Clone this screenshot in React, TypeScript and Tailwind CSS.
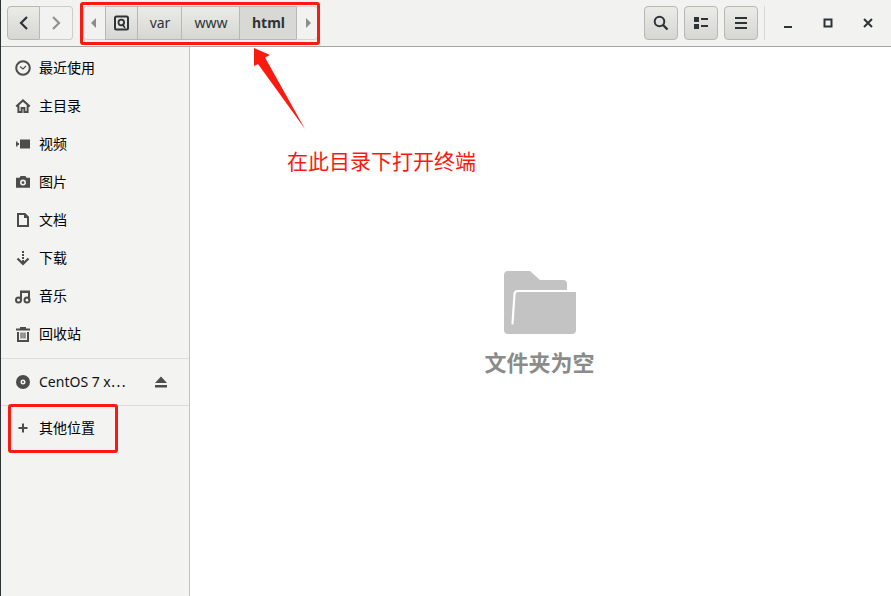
const FONT = "font-['Noto_Sans','Noto_Sans_CJK_SC',sans-serif]";

const btn = "flex h-[34px] items-center justify-center border border-[#b8b8b2] bg-gradient-to-b from-[#ebebe8] to-[#d6d6d2]";

function Glyph({ children, size = 16 }: { children: React.ReactNode; size?: number }) {
  return (
    <svg width={size} height={size} viewBox="0 0 16 16" fill="#4c4c4c" className="shrink-0">
      {children}
    </svg>
  );
}

const sidebarItems: { label: string; icon: React.ReactNode }[] = [
  {
    label: "最近使用",
    icon: (
      <Glyph>
        <circle cx="8" cy="8" r="6.800" fill="none" stroke="#4c4c4c" strokeWidth="2" />
        <path d="M5 6.500 8 9l3-3" fill="none" stroke="#4c4c4c" strokeWidth="1.100" />
      </Glyph>
    ),
  },
  {
    label: "主目录",
    icon: (
      <Glyph>
        <path
          d="M1.200 8.600 8 2.400l6.800 6.200M3.400 7.500V14H6.600V10H9.400V14H12.600V7.500"
          fill="none"
          stroke="#4c4c4c"
          strokeWidth="2"
        />
      </Glyph>
    ),
  },
  {
    label: "视频",
    icon: (
      <Glyph>
        <path d="M1 5.500h1.500v1.500H4v2H2.500v1.500H1zM5 3.500h10v9H5z" />
      </Glyph>
    ),
  },
  {
    label: "图片",
    icon: (
      <Glyph>
        <path
          fillRule="evenodd"
          d="M5.500 2h5l1 1.800H15v10H1v-10h3.500zM8 5.600a3 3 0 1 0 0 6 3 3 0 0 0 0-6zM8 7.200a1.400 1.400 0 1 1 0 2.800 1.400 1.400 0 0 1 0-2.800z"
        />
      </Glyph>
    ),
  },
  {
    label: "文档",
    icon: (
      <Glyph>
        <path d="M3 2h6.500L13 5.500V14H3z" fill="none" stroke="#4c4c4c" strokeWidth="2" />
        <path d="M9 1h1l4 4v1H9z" />
      </Glyph>
    ),
  },
  {
    label: "下载",
    icon: (
      <Glyph>
        <path d="M7 1h2v2H7zM7 4h2v2H7zM7 7h2v2H7z" />
        <path d="M2.500 8.500 8 14l5.500-5.500" fill="none" stroke="#4c4c4c" strokeWidth="2.200" />
        <path d="M7 10h2v3H7z" />
      </Glyph>
    ),
  },
  {
    label: "音乐",
    icon: (
      <Glyph>
        <circle cx="3.500" cy="12" r="2.500" fill="none" stroke="#4c4c4c" strokeWidth="2" />
        <circle cx="12" cy="12" r="2.500" fill="none" stroke="#4c4c4c" strokeWidth="2" />
        <path d="M5 12V2.500h10V12h-2V5H7v7z" />
      </Glyph>
    ),
  },
  {
    label: "回收站",
    icon: (
      <Glyph>
        <path d="M5 1h6v1.500h4V4.500H1V2.500h4z" />
        <path d="M3 6v9h10V6" fill="none" stroke="#4c4c4c" strokeWidth="2" />
        <path d="M5.500 6.500h1.100v6H5.500zM7.450 6.500h1.100v6h-1.100zM9.400 6.500h1.100v6H9.400z" />
      </Glyph>
    ),
  },
];

function SidebarRow({ icon, children }: { icon: React.ReactNode; children: React.ReactNode }) {
  return (
    <div className="flex h-[38px] items-center gap-2 pl-[14px] text-sm text-black">
      {icon}
      <span>{children}</span>
    </div>
  );
}

export default function App() {
  return (
    <div className={`${FONT} relative flex h-[596px] w-[891px] flex-col overflow-hidden border-l border-[#2e3436] bg-white`}>
      {/* header bar */}
      <header className="flex h-[47px] shrink-0 items-center border-b border-[#a8a8a2] bg-[#f2f2f0] pl-[6px]">
        <div className="flex">
          <div className={`${btn} w-[33px] rounded-l-[4px]`}>
            <svg width="16" height="16" viewBox="0 0 16 16" fill="none" stroke="#2e3436" strokeWidth="2.200">
              <path d="M11 2 5 8l6 6" />
            </svg>
          </div>
          <div className="flex h-[34px] w-[33px] items-center justify-center rounded-r-[4px] border border-l-0 border-[#cdcdc8] bg-[#f2f2f0]">
            <svg width="16" height="16" viewBox="0 0 16 16" fill="none" stroke="#92928f" strokeWidth="2.200">
              <path d="m5 2 6 6-6 6" />
            </svg>
          </div>
        </div>

        {/* path bar */}
        <div className="ml-[10px] flex text-sm text-[#2e3436]">
          <div className="flex h-[34px] w-[22px] items-center justify-center rounded-l-[4px] border border-r-0 border-[#d4d4d0] bg-[#f2f2f0] pr-[2px]">
            <svg width="8" height="10" viewBox="0 0 8 10" fill="#8c8c88"><path d="M6 0v10L1 5z" /></svg>
          </div>
          <div className={`${btn} w-[33px]`}>
            <svg width="15" height="16" viewBox="0 0 15 16">
              <rect x="1" y="1.500" width="13" height="13" rx="1.500" fill="#e4e4e0" stroke="#2e3436" strokeWidth="2" />
              <circle cx="7.300" cy="7.500" r="2.800" fill="none" stroke="#2e3436" strokeWidth="1.800" />
              <path d="m8 9 3 3.800" stroke="#2e3436" strokeWidth="1.800" />
            </svg>
          </div>
          <div className={`${btn} w-[44px] border-l-0 pl-px`}>var</div>
          <div className={`${btn} w-[58px] border-l-0 pl-px`}>www</div>
          <div className="flex h-[34px] w-[56px] items-center justify-center border-y border-[#b8b8b2] bg-[#d8d8d4] pl-px font-bold">html</div>
          <div className="flex h-[34px] w-[22px] items-center justify-center rounded-r-[4px] border border-l-[#b8b8b2] border-y-[#d4d4d0] border-r-[#d4d4d0] bg-[#f2f2f0] pl-[2px]">
            <svg width="8" height="10" viewBox="0 0 8 10" fill="#8c8c88"><path d="M2 0v10l5-5z" /></svg>
          </div>
        </div>

        <div className="ml-auto flex items-center">
          <div className={`${btn} w-[34px] rounded-[4px]`}>
            <svg width="16" height="16" viewBox="0 0 16 16" fill="none" stroke="#2e3436" strokeWidth="2">
              <circle cx="6.500" cy="6.500" r="4.800" />
              <path d="m10 10 4.500 4.500" strokeWidth="2.400" />
            </svg>
          </div>
          <div className={`${btn} ml-[6px] w-[34px] rounded-[4px]`}>
            <svg width="14" height="12" viewBox="0 0 14 12" fill="#2e3436">
              <path d="M0 0h5v5H0zM0 7h5v5H0zM7 1h7v2H7zM7 8h7v2H7z" />
            </svg>
          </div>
          <div className={`${btn} ml-[6px] w-[34px] rounded-[4px]`}>
            <svg width="14" height="12" viewBox="0 0 14 12" fill="#2e3436">
              <path d="M1 0h12v2H1zM1 5h12v2H1zM1 10h12v2H1z" />
            </svg>
          </div>
          <div className="ml-[6px] h-[34px] w-px bg-[#d8d8d4]" />
          <div className="flex w-[46px] justify-center">
            <svg width="12" height="12" viewBox="0 0 12 12" fill="#2e3436"><path d="M2 9h8v2H2z" /></svg>
          </div>
          <div className="flex w-[34px] justify-center">
            <svg width="10" height="10" viewBox="0 0 10 10" fill="none" stroke="#2e3436" strokeWidth="2"><path d="M1.500 1.500h7v7h-7z" /></svg>
          </div>
          <div className="flex w-[46px] justify-center">
            <svg width="10" height="10" viewBox="0 0 10 10" fill="none" stroke="#2e3436" strokeWidth="2"><path d="m1 1 8 8M9 1 1 9" /></svg>
          </div>
        </div>
      </header>

      <div className="flex min-h-0 flex-1">
        <aside className="flex w-[189px] shrink-0 flex-col border-r border-[#c4c4c0] bg-[#f3f3f1] pt-[2px]">
          {sidebarItems.map((item) => (
            <SidebarRow key={item.label} icon={item.icon}>{item.label}</SidebarRow>
          ))}
          <div className="mt-[5px] h-px bg-[#dcdcd8]" />
          <div className="pt-[4px]">
            <div className="flex h-[38px] items-center gap-2 pl-[14px] pr-[21px] text-sm text-[#111]">
              <Glyph>
                <path
                  fillRule="evenodd"
                  d="M8 1a7 7 0 1 1 0 14A7 7 0 0 1 8 1zM8 5.500a2.500 2.500 0 1 0 0 5 2.500 2.500 0 0 0 0-5zM8 7a1 1 0 1 1 0 2 1 1 0 0 1 0-2z"
                />
              </Glyph>
              <span className="flex-1">CentOS 7 x⋯</span>
              <svg width="14" height="12" viewBox="0 0 14 12" fill="#4c4c4c"><path d="M7 0.500 13 7H1zM1 9h12v2.500H1z" /></svg>
            </div>
          </div>
          <div className="mt-[4px] h-px bg-[#dcdcd8]" />
          <div className="pt-[3px]">
            <SidebarRow
              icon={
                <Glyph>
                  <path d="M7 3.500h2V7h3.500v2H9v3.500H7V9H3.500V7H7z" />
                </Glyph>
              }
            >
              其他位置
            </SidebarRow>
          </div>
        </aside>

        {/* empty folder placeholder */}
        <main className="flex flex-1 flex-col items-center bg-white pt-[224px]">
          <svg width="72" height="63" viewBox="0 0 72 63" className="-translate-x-px">
            <path d="M4 0H26L36 9H59q4 0 4 4v6H72v40q0 4-4 4H4q-4 0-4-4V4q0-4 4-4z" fill="#c2c3c2" />
            <path d="M8.500 52.500 10.500 23q.3-3 3.500-3H72" fill="none" stroke="#fff" strokeWidth="2.200" strokeLinecap="round" />
          </svg>
          <div className="mt-[13px] -translate-x-px text-[22px] leading-[30px] font-bold text-[#8a8c8a]">文件夹为空</div>
        </main>
      </div>

      {/* red annotations on top of the screenshot */}
      <div className="absolute left-[79px] top-[2px] h-[43px] w-[240px] rounded-[3px] border-[3px] border-[#fb1a10]" />
      <div className="absolute left-[7px] top-[404px] h-[49px] w-[110px] rounded-[3px] border-[3px] border-[#fb1a10]" />
      <svg className="absolute left-[251px] top-[46px]" width="60" height="90" viewBox="0 0 60 90">
        <path d="M2 2 18 9 13 11.500 53 83 6 18 2 20z" fill="#fb1a10" />
      </svg>
      <div className="absolute left-[286px] top-[146px] text-[21px] leading-[30px] text-[#fb1a10]">在此目录下打开终端</div>
    </div>
  );
}
